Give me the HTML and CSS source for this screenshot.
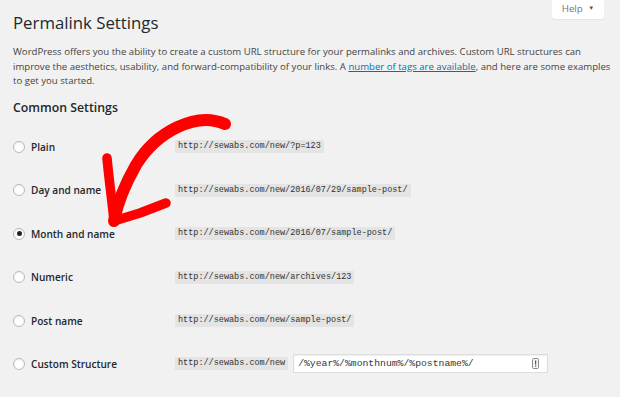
FILE: index.html
```html
<!DOCTYPE html>
<html>
<head>
    <meta charset="UTF-8">
    <title>Permalink Settings</title>
    <link rel="stylesheet" href="styles.css">
</head>
<body>
    <div class="wrap">
        <div class="page-head">
            <h1>Permalink Settings</h1>
            <button class="help-button">Help <span class="caret">&#9660;</span></button>
        </div>

        <p class="intro">WordPress offers you the ability to create a custom URL structure for your permalinks and archives. Custom URL structures can improve the aesthetics, usability, and forward-compatibility of your links. A <a href="#">number of tags are available</a>, and here are some examples to get you started.</p>

        <h2>Common Settings</h2>

        <div class="options">
            <div class="option">
                <label class="option-label"><span class="radio"></span>Plain</label>
                <code>http://sewabs.com/new/?p=123</code>
            </div>
            <div class="option">
                <label class="option-label"><span class="radio"></span>Day and name</label>
                <code>http://sewabs.com/new/2016/07/29/sample-post/</code>
            </div>
            <div class="option">
                <label class="option-label"><span class="radio checked"></span>Month and name</label>
                <code>http://sewabs.com/new/2016/07/sample-post/</code>
            </div>
            <div class="option">
                <label class="option-label"><span class="radio"></span>Numeric</label>
                <code>http://sewabs.com/new/archives/123</code>
            </div>
            <div class="option">
                <label class="option-label"><span class="radio"></span>Post name</label>
                <code>http://sewabs.com/new/sample-post/</code>
            </div>
            <div class="option">
                <label class="option-label"><span class="radio"></span>Custom Structure</label>
                <code>http://sewabs.com/new</code>
                <div class="custom-input">
                    <span class="custom-value">/%year%/%monthnum%/%postname%/</span>
                    <svg class="field-icon" width="7" height="11" viewBox="0 0 7 11">
                        <rect x="0.5" y="0.5" width="6" height="10" rx="1" fill="#f4f4f4" stroke="#8a8a8a"/>
                        <rect x="3" y="2.5" width="1.2" height="4" fill="#555"/>
                        <rect x="3" y="7.5" width="1.2" height="1.2" fill="#555"/>
                    </svg>
                </div>
            </div>
        </div>
    </div>

    <!-- hand drawn arrow over the options -->
    <svg class="arrow" width="620" height="397" viewBox="0 0 620 397">
        <path d="M225 124 C 196 111, 156 132, 136 165 C 124 186, 117 205, 114 221" fill="none" stroke="#f00" stroke-width="12" stroke-linecap="round"/>
        <path d="M107 158 C 109 180, 112 200, 114 221 L 140 213 L 166 203" fill="none" stroke="#f00" stroke-width="9.5" stroke-linecap="round" stroke-linejoin="round"/>
    </svg>
</body>
</html>
```

FILE: styles.css
```css
body {
    margin: 0;
    background-color: #f1f1f1;
    font-family: "Open Sans", "Liberation Sans", sans-serif;
    color: #444;
}

.wrap {
    padding: 0 5px 0 13px;
}

.page-head {
    display: flex;
    justify-content: space-between;
    align-items: flex-start;
}

h1 {
    margin: 11px 0 0;
    font-size: 16.8px;
    line-height: 23px;
    font-weight: 400;
    color: #23282d;
}

.help-button {
    margin: 0 11px 0 0;
    width: 52px;
    height: 19px;
    padding: 0 0 2px;
    border: none;
    border-radius: 0 0 3px 3px;
    background-color: #fff;
    box-shadow: 0 1px 1px rgba(0, 0, 0, 0.06);
    font-family: "Open Sans", "Liberation Sans", sans-serif;
    font-size: 9.75px;
    color: #72777c;
}

    .help-button .caret {
        font-size: 6px;
        margin-left: 3px;
        vertical-align: 2px;
        color: #555;
    }

.intro {
    max-width: 600px;
    margin: 11px 0 0;
    font-size: 9.6px;
    line-height: 14.6px;
}

    .intro a {
        color: #0073aa;
    }

h2 {
    margin: 10px 0 0;
    font-size: 12.3px;
    line-height: 17px;
    font-weight: 600;
    color: #23282d;
}

.options {
    margin-top: 9.5px;
}

.option {
    display: flex;
    align-items: center;
    height: 43.4px;
}

.option-label {
    display: flex;
    align-items: center;
    width: 162px;
    font-size: 10.1px;
    font-weight: 600;
    color: #23282d;
}

.radio {
    position: relative;
    box-sizing: border-box;
    width: 12px;
    height: 12px;
    margin-right: 6px;
    border: 1px solid #b4b9be;
    border-radius: 50%;
    background-color: #fff;
    box-shadow: inset 0 1px 2px rgba(0, 0, 0, 0.07);
}

    .radio.checked::before {
        content: "";
        position: absolute;
        left: 2.5px;
        top: 2.5px;
        width: 5px;
        height: 5px;
        border-radius: 50%;
        background-color: #222;
    }

code {
    padding: 2px 3px;
    background-color: #e4e4e4;
    font-family: "Liberation Mono", "DejaVu Sans Mono", monospace;
    font-size: 8.5px;
    line-height: 9px;
    color: #333;
}

.custom-input {
    display: flex;
    align-items: center;
    justify-content: space-between;
    box-sizing: border-box;
    width: 255px;
    height: 19px;
    margin-left: 5px;
    padding: 0 8px 0 4px;
    border: 1px solid #ddd;
    background-color: #fff;
    box-shadow: inset 0 1px 2px rgba(0, 0, 0, 0.07);
}

.custom-value {
    font-family: "Liberation Mono", "DejaVu Sans Mono", monospace;
    font-size: 9.75px;
    color: #32373c;
}

.arrow {
    position: absolute;
    left: 0;
    top: 0;
    pointer-events: none;
}
```
